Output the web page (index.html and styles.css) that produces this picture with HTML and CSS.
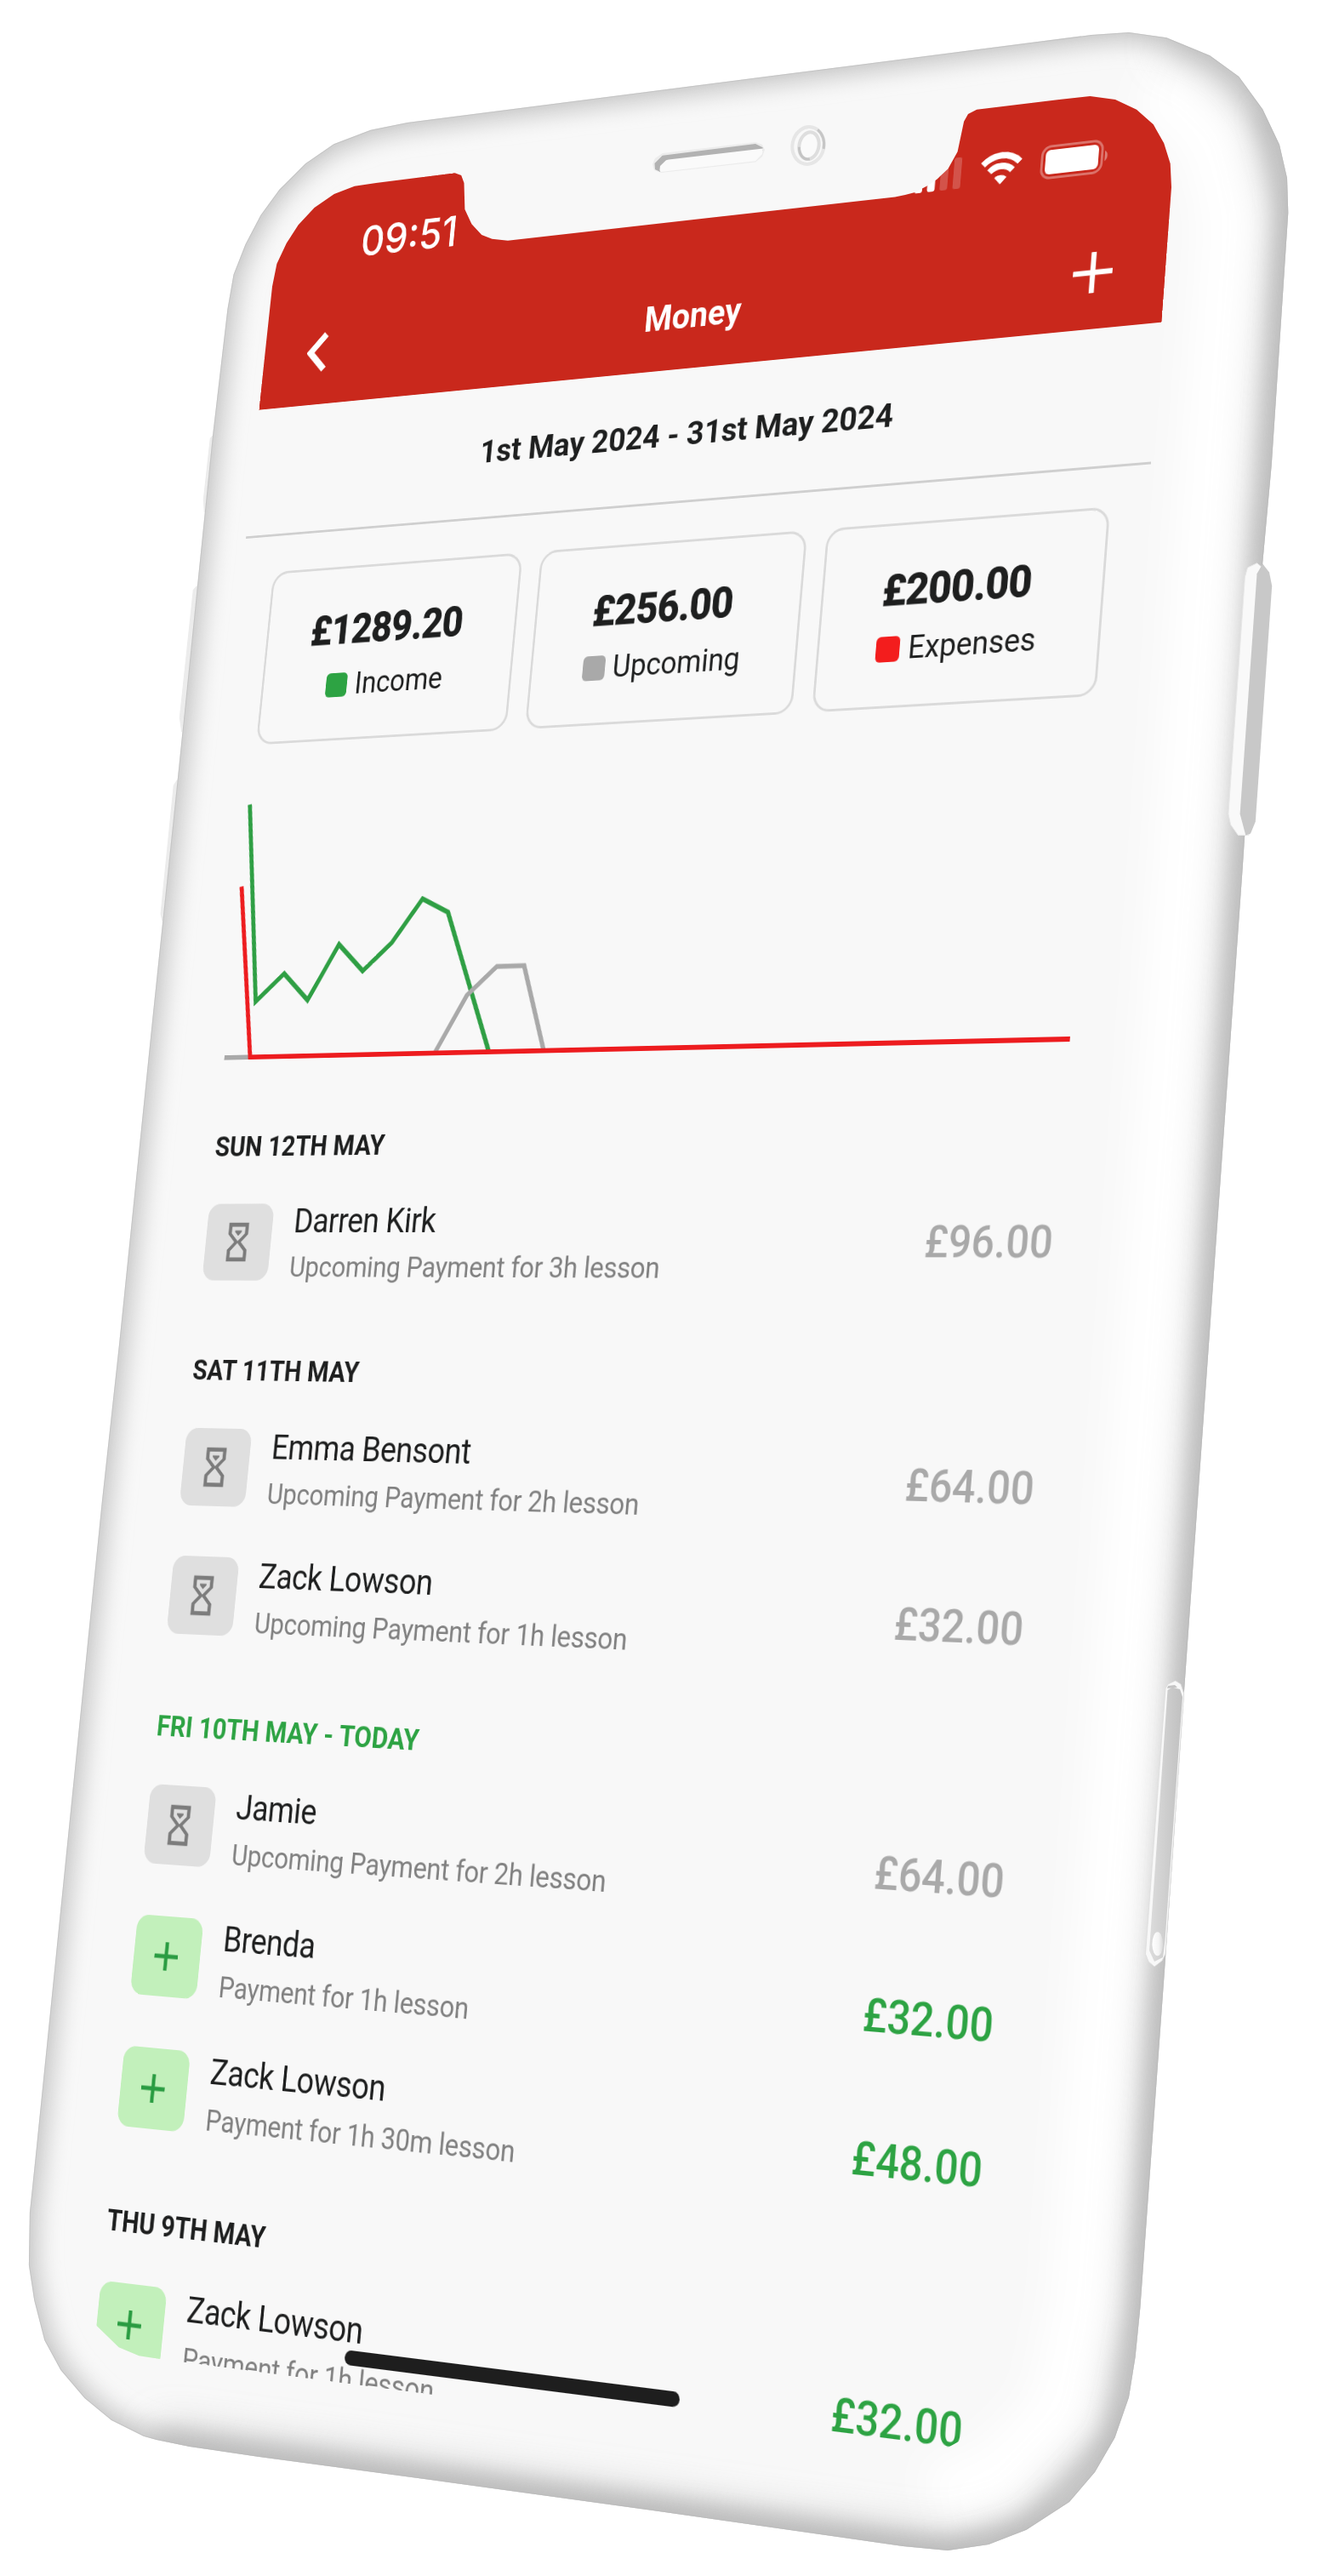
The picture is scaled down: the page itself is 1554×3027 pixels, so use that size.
FILE: index.html
```html
<!DOCTYPE html>
<html lang="en">
<head>
<meta charset="utf-8">
<title>Money</title>
<link rel="stylesheet" href="styles.css">
</head>
<body>
<svg class="defs" width="0" height="0" aria-hidden="true">
  <symbol id="sand" viewBox="0 0 24 24"><path d="M6 2H18V8L14 12L18 16V22H6V16L10 12L6 8V2M16 16.5L12 12.5L8 16.5V20H16V16.5M12 11.5L16 7.5V4H8V7.5L12 11.5M10 6H14V6.75L12 8.75L10 6.75V6Z"/></symbol>
  <symbol id="plus" viewBox="0 0 34 34"><path d="M17 0V34M0 17H34" fill="none" stroke="currentColor" stroke-width="5"/></symbol>
</svg>
<main class="stage">
  <svg class="phone" viewBox="0 0 1554 3027" width="1554" height="3027" aria-hidden="true">
    <defs>
      <path id="shell" d="M479 144L435.7 152.7L392.4 169.3L359 192.3L328.4 222.7L306.5 252.7L288.4 287.3L274.5 322.7L267.4 363.3L250 512L210.4 900L180 1190L140 1580L120 1763L41.2 2540L34.9 2600L33.9 2661.7L40.2 2703L52.3 2750L71.3 2785L99.4 2818L131 2844L168.7 2862.7L184 2867L223 2875L303 2886.7L526 2916.7L760 2949L1061.4 2992L1114 2997L1162 2990L1206.5 2972.7L1257 2940L1287 2905L1310.5 2864.6L1327 2817L1334.6 2769.6L1340.4 2711.6L1369.5 2308L1391.4 1995.5L1420 1593.7L1460.7 1020L1484.2 661.8L1494.8 545.7L1500.5 460L1514.3 250L1513 209.3L1504 170L1484.2 128.3L1456.3 90L1422.2 65.3L1371.3 44.3L1327 38L1282.7 41L900 90Z"/>
      <clipPath id="shellClip"><use href="#shell"/></clipPath>
      <filter id="soft" filterUnits="userSpaceOnUse" x="-50" y="-50" width="1700" height="3150"><feGaussianBlur stdDeviation="13"/></filter>
      <filter id="wide" filterUnits="userSpaceOnUse" x="-50" y="-50" width="1700" height="3150"><feGaussianBlur stdDeviation="22"/></filter>
      <filter id="fine" filterUnits="userSpaceOnUse" x="-50" y="-50" width="1700" height="3150"><feGaussianBlur stdDeviation="4"/></filter>
      <linearGradient id="tray" x1="0" x2="1" y1="0" y2="0"><stop offset="0" stop-color="#dcdcdc"/><stop offset="1" stop-color="#c0c0c0"/></linearGradient>
      <linearGradient id="pin" x1="0" x2="1" y1="0" y2="0"><stop offset="0" stop-color="#fff"/><stop offset=".6" stop-color="#f4f4f4"/><stop offset="1" stop-color="#dadada"/></linearGradient>
    </defs>
    <!-- mute switch and volume buttons -->
    <path d="M250 512L247.300 515L239.300 587L240.300 601.700Z M231.700 688.300L227.300 693.300L211.300 843.300L213.700 860Z M208.300 916.700L204.300 922.700L189 1074L191 1082Z" fill="#ececec" stroke="#ececec"/>
    <g clip-path="url(#shellClip)">
      <use href="#shell" fill="#f8f8f8"/>
      <path d="M1371 44L1422 65L1484 128L1514 250L1484 662L1460 1020L1340 2711L1310 2864L1206 2972L1114 2997" fill="none" stroke="#fff" stroke-width="210" filter="url(#wide)"/>
      <use href="#shell" fill="none" stroke="#c6c6c6" stroke-width="22" filter="url(#soft)"/>
      <path d="M1371 44L1422 65L1484 128L1514 250L1484 662L1460 1020L1340 2711L1310 2864L1206 2972L1114 2997L184 2867" fill="none" stroke="#b4b4b4" stroke-opacity=".55" stroke-width="40" filter="url(#wide)"/>
      <path d="M1484 128L1514 250L1484 662L1460 1020L1340 2711L1310 2864L1206 2972L1114 2997L184 2867" fill="none" stroke="#aaa" stroke-opacity=".5" stroke-width="16" filter="url(#soft)"/>
      <use href="#shell" fill="none" stroke="#a8a8a8" stroke-opacity=".4" stroke-width="4" filter="url(#fine)"/>
      <use href="#shell" fill="none" stroke="#b8b8b8" stroke-opacity=".5" stroke-width="2"/>
    </g>
    <!-- power button -->
    <path d="M1477.5 661.8L1466.5 667L1463.4 678L1443.9 956.4L1446.6 969L1455.4 981.4L1468 981.4L1490 672Z" fill="#f9f9f9" stroke="#e8e8e8"/>
    <path d="M1484.2 662.5L1492 672.5L1495.2 688.6L1475.8 965.4L1470 979.6L1464.3 981.4L1457.6 956.4L1477.5 674.3Z" fill="#c8c8c8"/>
    <!-- sim tray -->
    <path d="M1370 1984L1373 1979L1381.700 1975L1388 1979L1391.700 1990L1370 2296L1366 2304L1357 2311L1350 2305L1346.500 2296Z" fill="#f8f8f8" stroke="#dcdcdc" stroke-width=".8"/>
    <path d="M1372.500 1986L1378 1982.700L1387 1985L1390 1994L1369.500 2280L1367 2300L1357 2305L1351 2292Z" fill="url(#tray)"/>
    <path d="M1373 1981L1381 1980L1384 1983L1372 1984Z" fill="#c4c4c4"/>
    <ellipse cx="1360.700" cy="2284.300" rx="6.300" ry="14" fill="url(#pin)"/>
    <!-- speaker and front camera -->
    <path d="M767 193L770 186L779 180L888 167L896 170L899 176L896 184L888 190.500L777 203L769 200Z" fill="#ececec"/>
    <path d="M769.5 192L778.7 182.700L888 169L896.6 173.300L897 177L783 192L776 202L770 199Z" fill="#b2b2b2"/>
    <path d="M775.4 200L776 195L783 188.300L786 187.500L897 174.500L896 181L888 189.300L776.6 202Z" fill="#fafafa"/>
    <g transform="rotate(12 950 171)">
      <ellipse cx="950" cy="171" rx="18.500" ry="22" fill="none" stroke="#e6e6e6" stroke-width="4"/>
      <path d="M957 150.500A18.500 22 0 0 1 968.500 171" fill="none" stroke="#c6c6c6" stroke-width="3"/>
      <ellipse cx="951" cy="171" rx="11.500" ry="16" fill="#fafafa" stroke="#dedede" stroke-width="4"/>
      <path d="M940 175A11.500 16 0 0 0 955 186" fill="none" stroke="#c4c4c4" stroke-width="3"/>
    </g>
  </svg>

  <div class="display">
    <div class="screen">
      <header class="header">
        <div class="status">
          <span class="time">09:51</span>
          <div class="status-icons">
            <svg width="61" height="42" viewBox="0 0 61 42" fill="#fff"><rect y="28" width="10" height="13" rx="3"/><rect x="16.500" y="20" width="10" height="21" rx="3"/><g opacity=".2"><rect x="33" y="11" width="10" height="30" rx="3"/><rect x="50" y="2" width="10" height="39" rx="3"/></g></svg>
            <svg width="54" height="42" viewBox="0 0 54 42"><g fill="none" stroke="#fff" stroke-width="8"><path d="M3 15.500A34 34 0 0 1 51 15.500"/><path d="M12 25A21 21 0 0 1 42 25"/></g><path d="M27 41.500L19 33A12 12 0 0 1 35 33Z" fill="#fff"/></svg>
            <svg width="87" height="42" viewBox="0 0 87 42"><rect x="1.500" y="1.500" width="77" height="39" rx="11" fill="none" stroke="#fff" stroke-opacity=".35" stroke-width="3"/><rect x="6" y="6" width="68" height="30" rx="6" fill="#fff"/><path d="M82 14.500A8 8 0 0 1 82 27.500Z" fill="#fff" fill-opacity=".4"/></svg>
          </div>
        </div>
        <nav class="nav">
          <svg class="back" width="32" height="54" viewBox="0 0 32 54"><path d="M27 4L5 27L27 50" fill="none" stroke="#fff" stroke-width="8.500"/></svg>
          <h1>Money</h1>
          <svg class="add" width="50" height="50" viewBox="0 0 50 50"><path d="M25 0V50M0 25H50" stroke="#fff" stroke-width="6.500"/></svg>
        </nav>
      </header>

      <div class="range">1st May 2024 - 31st May 2024</div>

      <section class="cards">
        <div class="card"><strong>£1289.20</strong><span><i class="swatch income"></i>Income</span></div>
        <div class="card"><strong>£256.00</strong><span><i class="swatch upcoming"></i>Upcoming</span></div>
        <div class="card"><strong>£200.00</strong><span><i class="swatch expenses"></i>Expenses</span></div>
      </section>

      <svg class="chart" width="1242" height="494" viewBox="0 730 1242 494" fill="none" stroke-width="6">
        <polyline stroke="#2f9f44" points="47,807 85.300,1060.500 123.500,1026 161.800,1060.500 200,991.300 238.300,1025.700 276.600,991.300 314.900,937.500 353.100,955.500 429.700,1131"/>
        <polyline stroke="#a9a9a9" points="47,1131 353.100,1131 391.400,1060 429.700,1025.600 468,1025.600 506.200,1131 1195,1131"/>
        <polyline stroke="#ed1c1f" points="47,912.500 85.300,1131 1195,1131"/>
      </svg>

      <section class="group">
        <h2>SUN 12TH MAY</h2>
        <article class="row"><div class="badge wait"><svg><use href="#sand"/></svg></div><div class="who"><b>Darren Kirk</b><small>Upcoming Payment for 3h lesson</small></div><span class="sum">£96.00</span></article>
      </section>
      <section class="group">
        <h2>SAT 11TH MAY</h2>
        <article class="row"><div class="badge wait"><svg><use href="#sand"/></svg></div><div class="who"><b>Emma Bensont</b><small>Upcoming Payment for 2h lesson</small></div><span class="sum">£64.00</span></article>
        <article class="row"><div class="badge wait"><svg><use href="#sand"/></svg></div><div class="who"><b>Zack Lowson</b><small>Upcoming Payment for 1h lesson</small></div><span class="sum">£32.00</span></article>
      </section>
      <section class="group today">
        <h2>FRI 10TH MAY - TODAY</h2>
        <article class="row"><div class="badge wait"><svg><use href="#sand"/></svg></div><div class="who"><b>Jamie</b><small>Upcoming Payment for 2h lesson</small></div><span class="sum">£64.00</span></article>
        <article class="row"><div class="badge paid"><svg><use href="#plus"/></svg></div><div class="who"><b>Brenda</b><small>Payment for 1h lesson</small></div><span class="sum in">£32.00</span></article>
        <article class="row"><div class="badge paid"><svg><use href="#plus"/></svg></div><div class="who"><b>Zack Lowson</b><small>Payment for 1h 30m lesson</small></div><span class="sum in">£48.00</span></article>
      </section>
      <section class="group">
        <h2>THU 9TH MAY</h2>
        <article class="row"><div class="badge paid"><svg><use href="#plus"/></svg></div><div class="who"><b>Zack Lowson</b><small>Payment for 1h lesson</small></div><span class="sum in">£32.00</span></article>
      </section>
      <div class="home-bar"></div>
    </div>
  </div>
</main>
</body>
</html>
```
FILE: styles.css
```css
* { box-sizing: border-box; }

body {
  margin: 0;
  background: #fff;
  font-family: Roboto, "Liberation Sans", sans-serif;
  color: #1e1f1f;
}

.defs { position: absolute; }

.stage {
  position: relative;
  width: 1554px;
  height: 3027px;
  overflow: hidden;
}

.phone { display: block; }

/* visible glass area, notch cut out of the top edge */
.display {
  position: absolute;
  inset: 0;
  clip-path: polygon(304.4px 481.7px, 320px 336.7px, 325.4px 310px, 336.8px 285.7px, 350.7px 264.3px, 369.6px 244px, 392.8px 228px, 416.8px 218.7px, 442px 215px, 534.6px 203.3px, 542.2px 206px, 545.5px 215px, 546.4px 246px, 554.4px 263.3px, 566.2px 276px, 578.4px 280.7px, 596.9px 282.7px, 1052px 231.5px, 1064px 229px, 1075.6px 226px, 1090.2px 218.3px, 1101.3px 210.7px, 1114.5px 198.3px, 1125.6px 178.3px, 1133.1px 142.7px, 1138px 134px, 1148.2px 128.7px, 1245px 117px, 1281.4px 113px, 1311px 117px, 1336px 128.7px, 1355.8px 146.3px, 1368.2px 168.3px, 1375.7px 192.3px, 1377px 220px, 1365.5px 378.7px, 1190.3px 2721.6px, 1166px 2818.6px, 1136px 2864px, 1100px 2884px, 1065px 2886.5px, 187.6px 2772px, 163.4px 2768.3px, 139.6px 2758.3px, 113.4px 2732.7px, 95px 2696.7px, 89px 2596px);
}

/* 414pt-wide app screen at 3x, laid onto the tilted phone */
.screen {
  position: relative;
  width: 1242px;
  height: 2713px;
  overflow: hidden;
  transform-origin: 0 0;
  transform: matrix3d(0.75007, -0.111877, 0, -0.000076366, -0.097192, 0.8756, 0, -0.000022751, 0, 0, 1, 0, 332.391, 229.527, 0, 1.0065523);
}

.header {
  height: 288px;
  background: #c9281c;
  color: #fff;
}

.status {
  display: flex;
  justify-content: space-between;
  align-items: center;
  height: 154px;
  padding: 0 83px 0 130px;
}

.time {
  font-family: Inter, "Liberation Sans", sans-serif;
  font-size: 54.5px;
  font-weight: 500;
}

.status-icons { display: flex; gap: 24px; }

.nav {
  display: grid;
  grid-template-columns: 1fr auto 1fr;
  align-items: center;
  height: 130px;
  padding: 0 63px;
}

.nav h1 { margin: 4px 0 0; font-size: 44px; line-height: 52px; font-weight: 700; }
.back { margin-left: 2px; }
.add { justify-self: end; margin-right: 4px; }

.range {
  display: flex;
  justify-content: center;
  align-items: center;
  height: 170px;
  padding-bottom: 3px;
  border-bottom: 3px solid #cfcfcf;
  font-size: 41.5px;
  font-weight: 700;
}

.cards {
  display: grid;
  grid-template-columns: repeat(3, 1fr);
  gap: 26px;
  padding: 47px 47px 0;
}

.card {
  display: flex;
  flex-direction: column;
  align-items: center;
  gap: 17px;
  height: 225px;
  padding-top: 50px;
  border: 3px solid #dadada;
  border-radius: 23px;
}

.card strong {
  margin-right: 11px;
  font-size: 51.8px;
  line-height: 60px;
  letter-spacing: -.3px;
  -webkit-text-stroke: 1px currentColor;
}
.card span { display: flex; align-items: center; gap: 11px; margin-right: 3px; font-size: 38.3px; line-height: 46px; }
.swatch { width: 31px; height: 31px; border-radius: 6px; }
.income { background: #2da343; }
.upcoming { background: #a9a9a9; }
.expenses { background: #f31d1d; }

.chart { display: block; }

.group { padding: 0 49px 92px 47px; }
.group h2 { margin: 0 0 50px; font-size: 35px; line-height: 42px; font-weight: 700; }
.group.today h2 { font-size: 35.4px; color: #2da343; }

.row { display: flex; align-items: center; height: 96px; }
.row + .row { margin-top: 62px; }

.badge {
  display: flex;
  justify-content: center;
  align-items: center;
  width: 96px;
  height: 96px;
  margin-right: 31px;
  border-radius: 17px;
}
.wait { background: #dfdfdf; fill: #7c7c7c; }
.wait svg { width: 58px; height: 58px; margin-right: 3px; }
.paid { background: #c2f0bb; color: #2a9c42; }
.paid svg { width: 34px; height: 34px; margin-right: 3px; }

.who { align-self: flex-start; flex: 1; white-space: nowrap; }
.who b { display: block; font-size: 42.5px; line-height: 44px; letter-spacing: -.5px; font-weight: 400; }
.who small { display: block; margin-top: 13px; font-size: 35.5px; line-height: 44px; letter-spacing: -.22px; color: #808080; }

.sum { font-size: 51px; font-weight: 500; color: #a9a9a9; }
.in { color: #2da343; }

.home-bar {
  position: absolute;
  left: 399px;
  top: 2675px;
  width: 444px;
  height: 17px;
  border-radius: 9px;
  background: #1e1e1e;
}
```
